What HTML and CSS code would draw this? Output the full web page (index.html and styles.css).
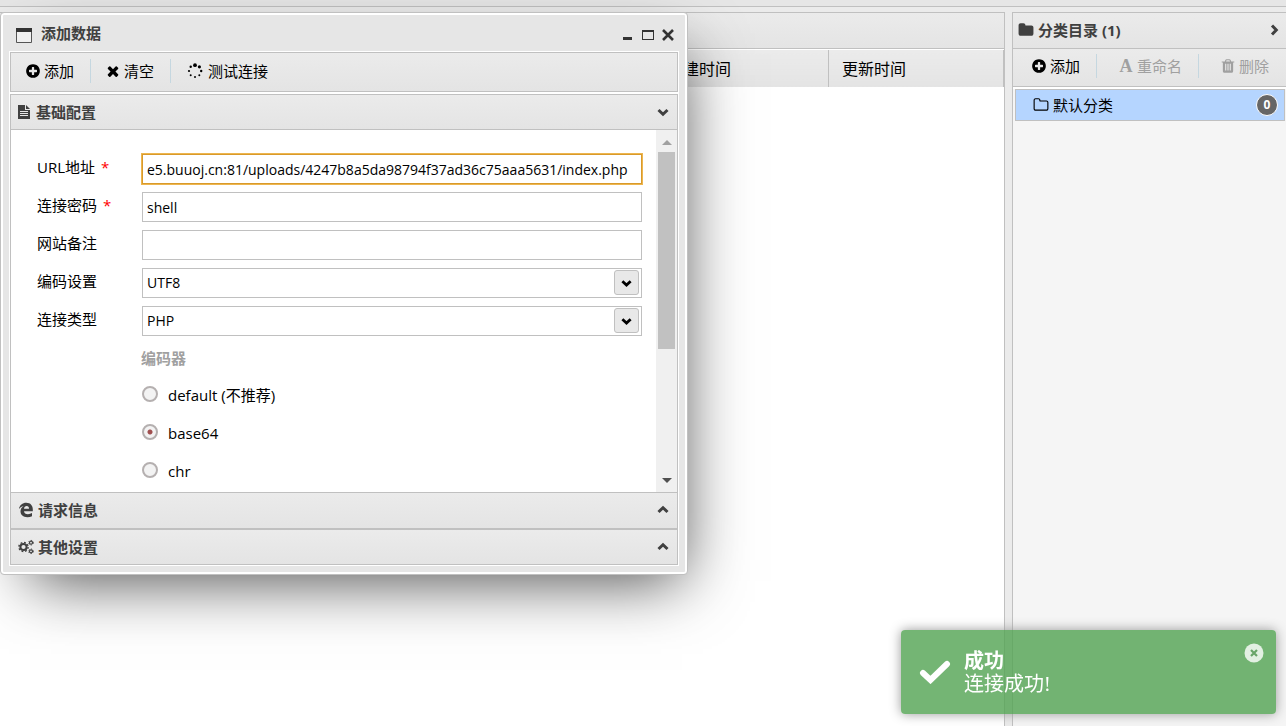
FILE: index.html
```html
<!DOCTYPE html>
<html lang="zh-CN">
<head>
  <meta charset="UTF-8">
  <title>添加数据</title>
  <link rel="stylesheet" href="styles.css">
</head>
<body>
  <svg width="0" height="0" class="symbols">
    <symbol id="plus" viewBox="0 0 1792 1792"><path d="M1344 960v-128q0-26-19-45t-45-19h-256v-256q0-26-19-45t-45-19h-128q-26 0-45 19t-19 45v256h-256q-26 0-45 19t-19 45v128q0 26 19 45t45 19h256v256q0 26 19 45t45 19h128q26 0 45-19t19-45v-256h256q26 0 45-19t19-45zm320-64q0 209-103 385.5t-279.5 279.5-385.5 103-385.5-103-279.5-279.5-103-385.5 103-385.5 279.5-279.5 385.5-103 385.5 103 279.5 279.5 103 385.5z"/></symbol>
    <symbol id="remove" viewBox="0 0 1792 1792"><path d="M1490 1322q0 40-28 68l-136 136q-28 28-68 28t-68-28l-294-294-294 294q-28 28-68 28t-68-28l-136-136q-28-28-28-68t28-68l294-294-294-294q-28-28-28-68t28-68l136-136q28-28 68-28t68 28l294 294 294-294q28-28 68-28t68 28l136 136q28 28 28 68t-28 68l-294 294 294 294q28 28 28 68z"/></symbol>
    <symbol id="folder" viewBox="0 0 1792 1792"><path d="M1728 608v704q0 92-66 158t-158 66h-1216q-92 0-158-66t-66-158v-960q0-92 66-158t158-66h320q92 0 158 66t66 158v32h672q92 0 158 66t66 158z"/></symbol>
    <symbol id="folder-open" viewBox="0 0 1792 1792"><path d="M1600 1312v-704q0-40-28-68t-68-28h-704q-40 0-68-28t-28-68v-64q0-40-28-68t-68-28h-320q-40 0-68 28t-28 68v960q0 40 28 68t68 28h1216q40 0 68-28t28-68zm128-704v704q0 92-66 158t-158 66h-1216q-92 0-158-66t-66-158v-960q0-92 66-158t158-66h320q92 0 158 66t66 158v32h672q92 0 158 66t66 158z"/></symbol>
    <symbol id="trash" viewBox="0 0 1792 1792"><path d="M704 1376v-704q0-14-9-23t-23-9h-64q-14 0-23 9t-9 23v704q0 14 9 23t23 9h64q14 0 23-9t9-23zm256 0v-704q0-14-9-23t-23-9h-64q-14 0-23 9t-9 23v704q0 14 9 23t23 9h64q14 0 23-9t9-23zm256 0v-704q0-14-9-23t-23-9h-64q-14 0-23 9t-9 23v704q0 14 9 23t23 9h64q14 0 23-9t9-23zm-544-992h448l-48-117q-7-9-17-11h-317q-10 2-17 11zm928 32v64q0 14-9 23t-23 9h-96v948q0 83-47 143.5t-113 60.5h-832q-66 0-113-58.5t-47-141.5v-952h-96q-14 0-23-9t-9-23v-64q0-14 9-23t23-9h309l70-167q15-37 54-63t79-26h320q40 0 79 26t54 63l70 167h309q14 0 23 9t9 23z"/></symbol>
    <symbol id="chevron" viewBox="0 0 12 12"><path d="M1.500 4 6 8.300 10.500 4" fill="none" stroke="currentColor" stroke-width="3"/></symbol>
  </svg>

  <div class="topbar"></div>

  <div class="layout">
    <div class="shells">
      <div class="panel-header"></div>
      <table class="grid">
        <thead>
          <tr><th></th><th>创建时间</th><th>更新时间</th></tr>
        </thead>
      </table>
    </div>

    <div class="category">
      <div class="panel-header">
        <svg class="icon"><use href="#folder"/></svg>
        <span>分类目录 (1)</span>
        <svg class="arrow arrow-right"><use href="#chevron"/></svg>
      </div>
      <div class="category-toolbar">
        <button><svg class="icon"><use href="#plus"/></svg>添加</button>
        <button disabled><span class="icon-font">A</span>重命名</button>
        <button disabled><svg class="icon"><use href="#trash"/></svg>删除</button>
      </div>
      <div class="category-item">
        <svg class="icon"><use href="#folder-open"/></svg>
        <span>默认分类</span>
        <span class="badge">0</span>
      </div>
    </div>
  </div>

  <div class="window">
    <div class="window-header">
      <svg class="window-icon" viewBox="0 0 16 16"><path d="M.5 1.500h15v14H.5z" fill="#f0f0f0" stroke="#555"/><path d="M0 1h16v4H0z" fill="#333"/></svg>
      <span>添加数据</span>
      <div class="window-buttons">
        <button aria-label="最小化"><svg viewBox="0 0 12 12"><path d="M1 8h9v3H1z"/></svg></button>
        <button aria-label="最大化"><svg viewBox="0 0 12 12"><path d="M0 1h12v10H0zM1 3v7h10V3z" fill-rule="evenodd"/></svg></button>
        <button aria-label="关闭"><svg viewBox="0 0 12 12"><path d="M1 1l10 10M11 1L1 11" stroke="#333" stroke-width="2.600"/></svg></button>
      </div>
    </div>

    <div class="window-body">
      <div class="toolbar">
        <button><svg class="icon"><use href="#plus"/></svg>添加</button>
        <button><svg class="icon"><use href="#remove"/></svg>清空</button>
        <button>
          <svg class="icon" viewBox="0 0 16 16"><circle cx="8" cy="2.200" r="1.900"/><circle cx="12.400" cy="3.800" r="1.600"/><circle cx="14.200" cy="8" r="1.200"/><circle cx="12.300" cy="12.300" r="1"/><circle cx="8" cy="14" r="1"/><circle cx="3.700" cy="12.300" r="1"/><circle cx="2" cy="8" r="1.100"/><circle cx="3.700" cy="3.700" r="1.200"/></svg>测试连接
        </button>
      </div>

      <div class="section-header">
        <svg class="icon" viewBox="0 0 16 16"><path d="M2 1h7v5h5v9H2zM10 1l4 4h-4zM4 7v1h8V7zM4 9v1h8V9zM4 11v1h8v-1z" fill-rule="evenodd"/></svg>
        <span>基础配置</span>
        <svg class="arrow"><use href="#chevron"/></svg>
      </div>
      <div class="section-body">
        <form>
          <div class="row">
            <label for="url">URL地址 <em>*</em></label>
            <input type="text" id="url" class="focused" value="e5.buuoj.cn:81/uploads/4247b8a5da98794f37ad36c75aaa5631/index.php">
          </div>
          <div class="row">
            <label for="pwd">连接密码 <em>*</em></label>
            <input type="text" id="pwd" value="shell">
          </div>
          <div class="row">
            <label for="note">网站备注</label>
            <input type="text" id="note">
          </div>
          <div class="row">
            <label for="encode">编码设置</label>
            <div class="combo">
              <select id="encode"><option>UTF8</option></select>
              <span class="combo-arrow"><svg class="arrow"><use href="#chevron"/></svg></span>
            </div>
          </div>
          <div class="row">
            <label for="type">连接类型</label>
            <div class="combo">
              <select id="type"><option>PHP</option></select>
              <span class="combo-arrow"><svg class="arrow"><use href="#chevron"/></svg></span>
            </div>
          </div>
          <fieldset>
            <legend>编码器</legend>
            <div class="option"><input type="radio" name="encoder" id="enc-default"><label for="enc-default">default (不推荐)</label></div>
            <div class="option"><input type="radio" name="encoder" id="enc-base64" checked><label for="enc-base64">base64</label></div>
            <div class="option"><input type="radio" name="encoder" id="enc-chr"><label for="enc-chr">chr</label></div>
          </fieldset>
        </form>
        <div class="scrollbar">
          <span class="scroll-up"></span>
          <span class="scroll-thumb"></span>
          <span class="scroll-down"></span>
        </div>
      </div>

      <div class="section-header">
        <svg class="icon" viewBox="0 0 16 16"><path d="M1 7C1.500 3.200 4.500.8 8.300.8c4.200 0 6.500 2.900 6.500 6.700v1.700H6c.1 2 1.700 3 4 3 1.500 0 2.800-.4 4-1.100v3.100c-1.300.7-2.900 1-4.600 1-4.200 0-6.900-2.300-6.900-5.900C2.500 7 3.700 5.300 5.600 4.300 3.700 4.500 2.200 5.400 1 7zM6 6.700h5c0-1.600-.8-2.600-2.300-2.600S6.200 5.100 6 6.700z" fill-rule="evenodd"/></svg>
        <span>请求信息</span>
        <svg class="arrow arrow-up"><use href="#chevron"/></svg>
      </div>
      <div class="section-header">
        <svg class="icon icon-line" viewBox="0 0 16 16"><circle cx="5.500" cy="8" r="3.100" stroke-width="2"/><circle cx="5.500" cy="8" r="4.600" stroke-width="1.400" stroke-dasharray="1.800 1.810"/><circle cx="13" cy="3.700" r="1.500" stroke-width="1.200"/><circle cx="13" cy="3.700" r="2.300" stroke-dasharray="1.200 1.210"/><circle cx="13" cy="12.300" r="1.500" stroke-width="1.200"/><circle cx="13" cy="12.300" r="2.300" stroke-dasharray="1.200 1.210"/></svg>
        <span>其他设置</span>
        <svg class="arrow arrow-up"><use href="#chevron"/></svg>
      </div>
    </div>
  </div>

  <div class="toast">
    <svg class="toast-icon" viewBox="0 0 32 24"><path d="M4 13l7.500 7L28 4" fill="none" stroke="#fff" stroke-width="6" stroke-linecap="round"/></svg>
    <div class="toast-text">
      <strong>成功</strong>
      <span>连接成功!</span>
    </div>
    <button class="toast-close" aria-label="关闭"><svg viewBox="0 0 20 20"><circle cx="10" cy="10" r="9.500" fill="#e3f0e3"/><path d="M7 7l6 6M13 7l-6 6" stroke="#6aa56a" stroke-width="2.200"/></svg></button>
  </div>
</body>
</html>
```
FILE: styles.css
```css
* {
  box-sizing: border-box;
}
body {
  margin: 0;
  height: 100vh;
  display: flex;
  flex-direction: column;
  overflow: hidden;
  background-color: #ebebeb;
  color: #000;
  font-family: "Open Sans", "Noto Sans CJK SC", sans-serif;
  font-size: 15px;
  line-height: 20px;
}
button,
input,
select {
  font: inherit;
  color: inherit;
}
button {
  border: none;
  background: none;
  padding: 0;
}
.symbols {
  position: absolute;
}
.icon {
  width: 16px;
  height: 16px;
  fill: currentColor;
}
.icon-line {
  fill: none;
  stroke: currentColor;
}
.arrow {
  width: 12px;
  height: 12px;
  margin-left: auto;
}
.arrow-up {
  transform: rotate(180deg);
}
.arrow-right {
  transform: rotate(-90deg);
}

/* layout */
.topbar {
  height: 7px;
  flex-shrink: 0;
  background-color: #e6e6e6;
  border-bottom: 1px solid #c0c0c0;
}
.layout {
  flex: 1;
  display: flex;
  gap: 7px;
  padding-top: 5px;
}
.shells {
  flex: 1;
  background-color: #fff;
  border: 1px solid #c0c0c0;
  border-width: 1px 1px 0 0;
}
.panel-header {
  height: 36px;
  display: flex;
  align-items: center;
  gap: 4px;
  padding: 0 6px 2px 5px;
  background-image: linear-gradient(#ebebeb, #e4e4e4);
  border-bottom: 1px solid #c0c0c0;
  color: #404040;
  font-weight: bold;
}
.grid {
  width: 100%;
  table-layout: fixed;
  border-collapse: collapse;
  margin-top: 1px;
}
.grid th {
  width: 175px;
  height: 37px;
  padding: 0 0 0 13px;
  text-align: left;
  font-weight: normal;
  font-size: 16px;
  background-image: linear-gradient(#ebebeb, #e4e4e4);
  border-right: 1px solid #c0c0c0;
}
.grid th:first-child {
  width: auto;
}
.category {
  width: 274px;
  background-color: #f5f5f5;
  border: 1px solid #c0c0c0;
  border-width: 1px 0 0 1px;
}
.category-toolbar {
  display: flex;
  height: 38px;
  padding: 5px 0 8px;
  background-image: linear-gradient(#ebebeb, #e4e4e4);
  border-bottom: 1px solid #c0c0c0;
  box-shadow: 0 2px 0 #fff;
  margin-bottom: 2px;
}
.category-toolbar button {
  display: flex;
  align-items: center;
  gap: 3px;
  padding: 0 16px 0 18px;
}
.category-toolbar button + button {
  padding-left: 21px;
  border-left: 1px solid #c5d7e0;
}
.category-toolbar button:disabled {
  color: #a0a0a0;
}
.icon-font {
  width: 16px;
  font: bold 18px "Liberation Serif", serif;
}
.category-item {
  display: flex;
  align-items: center;
  gap: 4px;
  height: 32px;
  margin: 0 1px 0 2px;
  padding: 0 6px 0 17px;
  background-color: #b5d5ff;
  border: 1px solid #c0c0c0;
}
.badge {
  width: 22px;
  height: 22px;
  margin-left: auto;
  border: 1px solid #fff;
  border-radius: 50%;
  background-color: #666;
  color: #fff;
  font-size: 12px;
  font-weight: bold;
  text-align: center;
}

/* add window */
.window {
  position: absolute;
  top: 12px;
  left: 0;
  width: 688px;
  padding: 2px 8px 8px;
  border: 1px solid #c0c0c0;
  border-radius: 4px;
  background-color: #e6e6e6;
  box-shadow: inset 0 0 0 2px #fff, 12px 24px 60px -18px rgba(0, 0, 0, 0.7);
}
.window-header {
  display: flex;
  align-items: center;
  gap: 9px;
  height: 36px;
  padding: 0 5px 0 7px;
  color: #404040;
  font-weight: bold;
}
.window-icon {
  width: 16px;
  height: 16px;
  margin-top: 3px;
}
.window-buttons {
  display: flex;
  gap: 8px;
  margin: 3px 0 0 auto;
}
.window-buttons svg {
  display: block;
  width: 12px;
  height: 12px;
  fill: #333;
}
.window-body {
  border: 1px solid #fff;
}
.toolbar {
  display: flex;
  height: 40px;
  padding: 6px 0 8px;
  margin-bottom: 2px;
  background-image: linear-gradient(#ebebeb, #e4e4e4);
  border: 1px solid #c0c0c0;
  box-shadow: 0 2px 0 #fff;
}
.toolbar button {
  display: flex;
  align-items: center;
  gap: 3px;
  padding: 0 16px 0 14px;
  border-right: 1px solid #c5d7e0;
}
.toolbar button:last-child {
  gap: 5px;
  padding-left: 16px;
  border-right: none;
}
.section-header {
  display: flex;
  align-items: center;
  gap: 4px;
  height: 36px;
  padding: 0 8px 1px 5px;
  background-image: linear-gradient(#ebebeb, #e4e4e4);
  border: 1px solid #c0c0c0;
  color: #404040;
  font-weight: bold;
}
.section-body {
  display: flex;
  height: 362px;
  overflow: hidden;
  background-color: #fff;
  border: 1px solid #c0c0c0;
  border-width: 0 1px;
}
.section-body + .section-header {
  height: 37px;
}
.section-body ~ .section-header {
  padding-left: 7px;
}
form {
  flex: 1;
  padding: 24px 14px 0 26px;
}
.row {
  display: flex;
  height: 30px;
  margin-bottom: 8px;
}
.row label {
  width: 105px;
  line-height: 26px;
}
.row em {
  margin-left: 2px;
  color: #f00;
  font-style: normal;
}
.row input,
.row select {
  flex: 1;
  min-width: 0;
  height: 30px;
  padding: 0 4px;
  border: 1px solid #c0c0c0;
  border-radius: 0;
  background-color: #fff;
  outline: none;
  appearance: none;
  font-size: 14px;
}
.row .focused {
  border-color: #d99a2b;
  box-shadow: 0 0 0 1px #edb64f;
}
.combo {
  flex: 1;
  display: flex;
  position: relative;
}
.combo-arrow {
  position: absolute;
  top: 2px;
  right: 3px;
  display: flex;
  align-items: center;
  width: 25px;
  height: 25px;
  padding: 0 6px;
  border: 1px solid #c0c0c0;
  border-radius: 3px;
  background-color: #e8e8e8;
  pointer-events: none;
}
fieldset {
  margin: 0 0 0 104px;
  padding: 0;
  border: none;
}
legend {
  height: 36px;
  padding: 0;
  line-height: 28px;
  color: #a0a0a0;
  font-weight: bold;
}
.option {
  display: flex;
  align-items: center;
  gap: 10px;
  height: 30px;
  margin-bottom: 8px;
}
.option input {
  width: 16px;
  height: 16px;
  margin: 0 0 2px 1px;
  appearance: none;
  border: 2px solid #b5b0b0;
  border-radius: 50%;
  background-color: #f3f3f3;
}
.option input:checked {
  background-image: radial-gradient(circle, #a05050 2px, transparent 3px);
}
.scrollbar {
  display: flex;
  flex-direction: column;
  width: 21px;
  padding: 10px 2px 9px;
  background-color: #f0f0f0;
}
.scroll-up,
.scroll-down {
  align-self: center;
  border: 5px solid transparent;
}
.scroll-up {
  border-top: none;
  border-bottom-color: #a0a0a0;
}
.scroll-down {
  margin-top: auto;
  border-bottom: none;
  border-top-color: #505050;
}
.scroll-thumb {
  height: 197px;
  margin-top: 7px;
  background-color: #c1c1c1;
}

/* notification */
.toast {
  position: fixed;
  right: 10px;
  bottom: 12px;
  display: flex;
  align-items: flex-start;
  width: 375px;
  height: 84px;
  padding: 13px 12px 0 18px;
  border-radius: 4px;
  background-color: rgba(81, 163, 81, 0.8);
  box-shadow: 0 0 12px #999;
  color: #fff;
  font-family: "Liberation Serif", "Noto Sans CJK SC", serif;
  font-size: 20px;
  line-height: 23px;
}
.toast-icon {
  width: 32px;
  height: 24px;
  margin: 17px 13px 0 0;
}
.toast-text {
  display: flex;
  flex-direction: column;
  padding-top: 7px;
}
.toast-close {
  margin-left: auto;
}
.toast-close svg {
  display: block;
  width: 20px;
  height: 20px;
}
```
